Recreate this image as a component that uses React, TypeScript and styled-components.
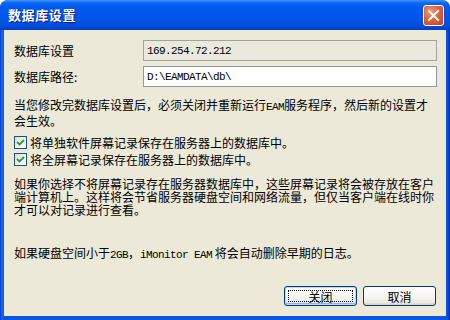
import React from "react";
import styled, { createGlobalStyle } from "styled-components";

const GlobalStyle = createGlobalStyle`
  html, body {
    margin: 0;
    padding: 0;
    background: #ffffff;
  }
  body {
    font-family: "Noto Sans CJK SC", "Liberation Sans", sans-serif;
    font-size: 12px;
  }
`;

const Window = styled.div`
  width: 450px;
  height: 320px;
  display: flex;
  flex-direction: column;
  background: linear-gradient(90deg, #0838c8 0px, #166ef0 2px, #0a55e2 4px, #0a55e2 446px, #0b4cd6 448px, #0028a8 450px);
  border-radius: 8px 8px 0 0;
  overflow: hidden;
`;

const TitleBar = styled.div`
  height: 30px;
  flex-shrink: 0;
  display: flex;
  align-items: center;
  justify-content: space-between;
  padding: 0 6px 0 8px;
  box-sizing: border-box;
  background: linear-gradient(
    180deg,
    #3d95ff 0px,
    #0a66f2 3px,
    #0058ee 8px,
    #0055e8 18px,
    #0050e0 25px,
    #0046d2 28px,
    #003dbd 30px
  );
`;

const Title = styled.span`
  color: #ffffff;
  font-weight: bold;
  font-size: 13px;
  letter-spacing: 0.6px;
  text-shadow: 1px 1px 0 #0a1a8c;
  line-height: 30px;
`;

const CloseButton = styled.div`
  width: 21px;
  height: 21px;
  box-sizing: border-box;
  border: 1px solid #ffffff;
  border-radius: 3px;
  background: radial-gradient(circle at 35% 30%, #f09a7c 0%, #e0623c 45%, #c6401c 100%);
  display: flex;
  align-items: center;
  justify-content: center;
`;

const Client = styled.div`
  flex: 1;
  margin: 0 4px 4px;
  background: #ece9d8;
  display: flex;
  flex-direction: column;
  padding: 10px 9px 10px 10px;
  color: #000000;
`;

const FieldRow = styled.div`
  display: grid;
  grid-template-columns: 129px 1fr;
  align-items: center;
  height: 21px;
  & + & {
    margin-top: 5px;
  }
`;

const Label = styled.span`
  font-size: 12px;
  line-height: 13px;
`;

const Field = styled.div<{ disabled?: boolean }>`
  height: 21px;
  box-sizing: border-box;
  border: 1px solid ${({ disabled }) => (disabled ? "#a0a4a0" : "#8c9aa6")};
  background: ${({ disabled }) => (disabled ? "#ebe9dc" : "#ffffff")};
  display: flex;
  align-items: center;
  padding-left: 3px;
  font-family: "Liberation Mono", monospace;
  font-size: 11px;
  letter-spacing: -0.6px;
  color: #000000;
`;

const Paragraph = styled.p<{ gap: number }>`
  margin: ${({ gap }) => gap}px 0 0;
  font-size: 12px;
  line-height: 13px;
  white-space: nowrap;
`;

const Latin = styled.span`
  font-family: "Liberation Mono", monospace;
  font-size: 11px;
  letter-spacing: -0.6px;
`;

const CheckList = styled.div`
  margin-top: 7px;
  display: flex;
  flex-direction: column;
`;

const CheckRow = styled.label`
  display: flex;
  align-items: center;
  height: 17px;
  gap: 3px;
  font-size: 12px;
  line-height: 13px;
`;

const Box = styled.span`
  width: 13px;
  height: 13px;
  box-sizing: border-box;
  border: 1px solid #1c5180;
  background: linear-gradient(135deg, #dcdcd7 0%, #f5f5f2 60%, #ffffff 100%);
  display: flex;
  align-items: center;
  justify-content: center;
  flex-shrink: 0;
`;

const ButtonRow = styled.div`
  margin-top: auto;
  display: flex;
  justify-content: flex-end;
  gap: 6px;
  padding-right: 1px;
`;

const Button = styled.button<{ isDefault?: boolean }>`
  position: relative;
  width: 73px;
  height: 20px;
  box-sizing: border-box;
  border: 1px solid #003c74;
  border-radius: 3px;
  background: linear-gradient(180deg, #ffffff 0%, #f8f8f5 40%, #ecebe6 85%, #d6d0c5 100%);
  font-family: "Noto Sans CJK SC", sans-serif;
  font-size: 12px;
  line-height: 13px;
  color: #000000;
  padding: 0;
  box-shadow: ${({ isDefault }) =>
    isDefault ? "inset 0 0 0 1px #c3d4f6, inset 0 -1px 0 1px #8db2f0" : "none"};
  ${({ isDefault }) =>
    isDefault &&
    `
    &::after {
      content: "";
      position: absolute;
      left: 3px;
      top: 3px;
      right: 3px;
      bottom: 3px;
      border: 1px dotted #000000;
    }
  `}
`;

const Check = () => (
  <svg width="9" height="9" viewBox="0 0 9 9">
    <polyline points="1,4 3.5,6.5 8,2" fill="none" stroke="#21a121" strokeWidth="1.8" />
  </svg>
);

export default function App() {
  return (
    <>
      <GlobalStyle />
      <Window>
        <TitleBar>
          <Title>数据库设置</Title>
          <CloseButton>
            <svg width="13" height="13" viewBox="0 0 13 13">
              <path d="M2 2 L11 11 M11 2 L2 11" stroke="#ffffff" strokeWidth="2" strokeLinecap="square" />
            </svg>
          </CloseButton>
        </TitleBar>
        <Client>
          <FieldRow>
            <Label>数据库设置</Label>
            <Field disabled>169.254.72.212</Field>
          </FieldRow>
          <FieldRow>
            <Label>数据库路径:</Label>
            <Field>D:\EAMDATA\db\</Field>
          </FieldRow>
          <Paragraph gap={11}>
            当您修改完数据库设置后，必须关闭并重新运行<Latin>EAM</Latin>服务程序，然后新的设置才
            <br />
            会生效。
          </Paragraph>
          <CheckList>
            <CheckRow>
              <Box>
                <Check />
              </Box>
              将单独软件屏幕记录保存在服务器上的数据库中。
            </CheckRow>
            <CheckRow>
              <Box>
                <Check />
              </Box>
              将全屏幕记录保存在服务器上的数据库中。
            </CheckRow>
          </CheckList>
          <Paragraph gap={9}>
            如果你选择不将屏幕记录存在服务器数据库中，这些屏幕记录将会被存放在客户
            <br />
            端计算机上。这样将会节省服务器硬盘空间和网络流量，但仅当客户端在线时你
            <br />
            才可以对记录进行查看。
          </Paragraph>
          <Paragraph gap={30}>
            如果硬盘空间小于<Latin>2GB</Latin>，<Latin>iMonitor EAM</Latin> 将会自动删除早期的日志。
          </Paragraph>
          <ButtonRow>
            <Button isDefault>关闭</Button>
            <Button>取消</Button>
          </ButtonRow>
        </Client>
      </Window>
    </>
  );
}
